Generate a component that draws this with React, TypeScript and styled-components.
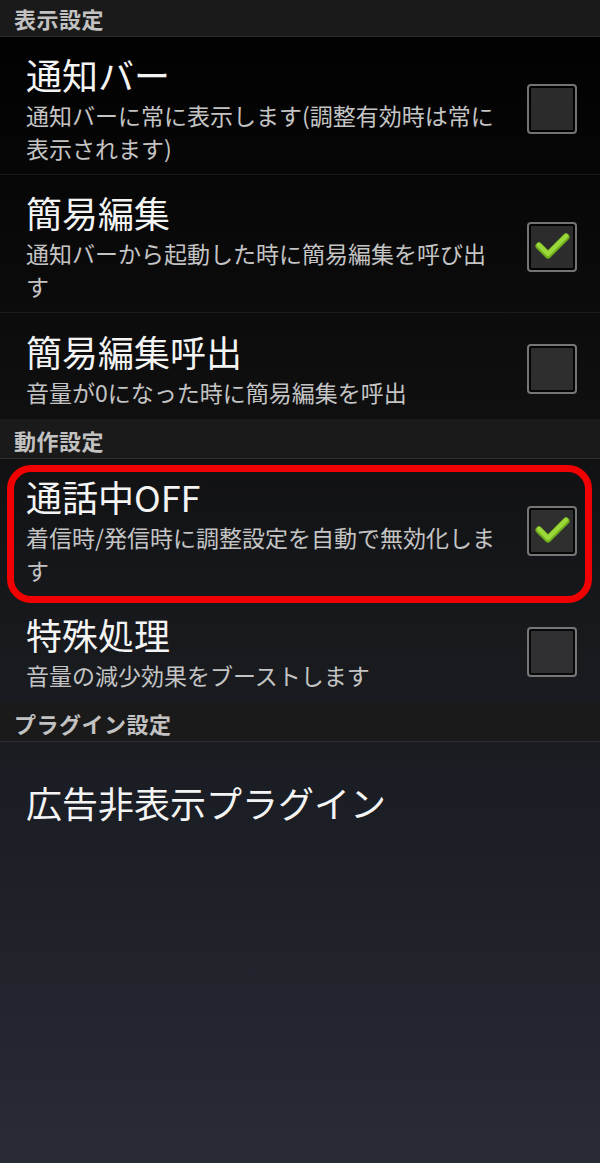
import React from 'react';
import styled, { createGlobalStyle } from 'styled-components';

const GlobalStyle = createGlobalStyle`
  html, body {
    margin: 0;
    padding: 0;
  }
  body {
    width: 600px;
    min-height: 1163px;
    overflow: hidden;
    font-family: "Noto Sans CJK JP", "Noto Sans", sans-serif;
    background: linear-gradient(
      to bottom,
      #000000 0px,
      #0f0f10 400px,
      #181a1e 650px,
      #1c1f26 850px,
      #292b35 1163px
    );
    background-repeat: no-repeat;
  }
`;

const Screen = styled.div`
  display: flex;
  flex-direction: column;
  width: 600px;
  margin-top: -3px;
`;

const SectionHeader = styled.div`
  height: 40px;
  box-sizing: border-box;
  display: flex;
  align-items: center;
  padding: 2px 0 0 14px;
  background: #1b1a1a;
  border-bottom: 1px solid rgba(255, 255, 255, 0.09);
  color: #c2c2c2;
  font-size: 22px;
  font-weight: 700;
  letter-spacing: 0.5px;
`;

const Row = styled.div<{ $last?: boolean; $tall?: boolean }>`
  position: relative;
  display: flex;
  align-items: center;
  box-sizing: border-box;
  min-height: ${p => (p.$tall ? 114 : 106)}px;
  padding: 15px 23px 9px 26px;
  border-bottom: ${p => (p.$last ? 'none' : '1px solid rgba(255, 255, 255, 0.07)')};
`;

const TextColumn = styled.div`
  flex: 0 0 476px;
  display: flex;
  flex-direction: column;
`;

const Title = styled.div`
  color: #f4f4f4;
  font-size: 36px;
  line-height: 44px;
  white-space: nowrap;
`;

const Summary = styled.div`
  margin-top: 3px;
  color: #c4c4c4;
  font-size: 23px;
  line-height: 33px;
  line-break: anywhere;
`;

const Box = styled.div`
  margin-left: auto;
  width: 50px;
  height: 50px;
  box-sizing: border-box;
  border: 2px solid rgba(255, 255, 255, 0.45);
  border-radius: 4px;
  background: rgba(0, 0, 0, 0.7);
  padding: 2px;
  flex-shrink: 0;
`;

const BoxFill = styled.div`
  width: 100%;
  height: 100%;
  background: rgba(255, 255, 255, 0.17);
  display: flex;
  align-items: center;
  justify-content: center;
`;

const Highlight = styled.div`
  position: absolute;
  top: 6px;
  left: 7px;
  right: 8px;
  bottom: -7px;
  border: 7px solid #f00000;
  border-radius: 24px;
  pointer-events: none;
`;

const CheckBox: React.FC<{ checked?: boolean }> = ({ checked }) => (
  <Box>
    <BoxFill>
      {checked && (
        <svg width="42" height="42" viewBox="0 0 42 42">
          <polyline
            points="8,20 17,29 35,11"
            fill="none"
            stroke="#6fae1c"
            strokeWidth="7"
            strokeLinecap="round"
            strokeLinejoin="round"
          />
          <polyline
            points="8,19 17,28 35,10"
            fill="none"
            stroke="#9bd83a"
            strokeWidth="4.5"
            strokeLinecap="round"
            strokeLinejoin="round"
          />
        </svg>
      )}
    </BoxFill>
  </Box>
);

interface Pref {
  title: string;
  summary?: string;
  checked?: boolean;
  marked?: boolean;
}

const sections: { name: string; items: Pref[] }[] = [
  {
    name: '表示設定',
    items: [
      { title: '通知バー', summary: '通知バーに常に表示します(調整有効時は常に表示されます)', checked: false },
      { title: '簡易編集', summary: '通知バーから起動した時に簡易編集を呼び出す', checked: true },
      { title: '簡易編集呼出', summary: '音量が0になった時に簡易編集を呼出', checked: false },
    ],
  },
  {
    name: '動作設定',
    items: [
      { title: '通話中OFF', summary: '着信時/発信時に調整設定を自動で無効化します', checked: true, marked: true },
      { title: '特殊処理', summary: '音量の減少効果をブーストします', checked: false },
    ],
  },
  {
    name: 'プラグイン設定',
    items: [{ title: '広告非表示プラグイン' }],
  },
];

export default function App() {
  return (
    <>
      <GlobalStyle />
      <Screen>
        {sections.map((section, si) => (
          <React.Fragment key={section.name}>
            <SectionHeader>{section.name}</SectionHeader>
            {section.items.map((item, i) => {
              const last = i === section.items.length - 1;
              return (
                <Row
                  key={item.title}
                  $last={last || item.marked}
                  $tall={si === sections.length - 1}
                >
                  <TextColumn>
                    <Title>{item.title}</Title>
                    {item.summary && <Summary>{item.summary}</Summary>}
                  </TextColumn>
                  {item.checked !== undefined && <CheckBox checked={item.checked} />}
                  {item.marked && <Highlight />}
                </Row>
              );
            })}
          </React.Fragment>
        ))}
      </Screen>
    </>
  );
}
